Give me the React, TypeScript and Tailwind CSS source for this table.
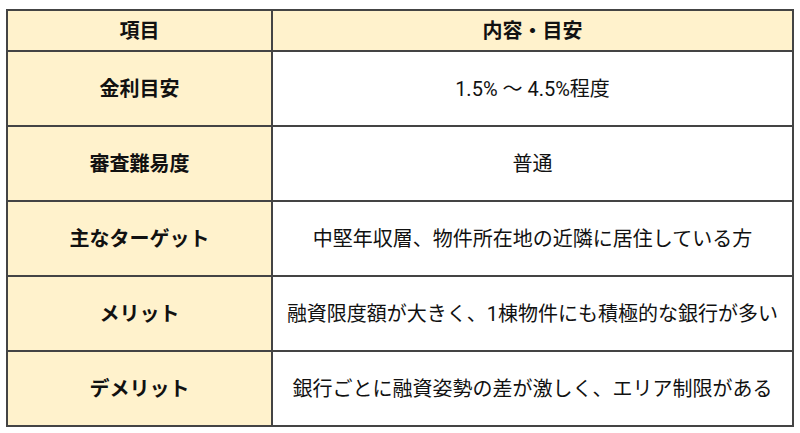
const rows: [string, string][] = [
  ["金利目安", "1.5% ～ 4.5%程度"],
  ["審査難易度", "普通"],
  ["主なターゲット", "中堅年収層、物件所在地の近隣に居住している方"],
  ["メリット", "融資限度額が大きく、1棟物件にも積極的な銀行が多い"],
  ["デメリット", "銀行ごとに融資姿勢の差が激しく、エリア制限がある"],
];

export default function App() {
  return (
    <div className="h-[433px] w-[800px] bg-white pl-[6px] pt-[9px] font-['Roboto','Noto_Sans_CJK_JP',sans-serif] text-[#111]">
      <table className="w-[788px] table-fixed border-collapse border-2 border-[#444]">
        <colgroup>
          <col className="w-[265px]" />
          <col />
        </colgroup>
        <thead>
          <tr className="h-[41px] bg-[#fff2cc]">
            <th className="border-2 border-[#444] text-[20px] font-bold">項目</th>
            <th className="border-2 border-[#444] text-[20px] font-bold">内容・目安</th>
          </tr>
        </thead>
        <tbody>
          {rows.map(([label, value]) => (
            <tr key={label} className="h-[75px]">
              <td className="border-2 border-[#444] bg-[#fff2cc] text-center text-[20px] font-bold">
                {label}
              </td>
              <td className="border-2 border-[#444] bg-white text-center text-[20px]">
                {value}
              </td>
            </tr>
          ))}
        </tbody>
      </table>
    </div>
  );
}
